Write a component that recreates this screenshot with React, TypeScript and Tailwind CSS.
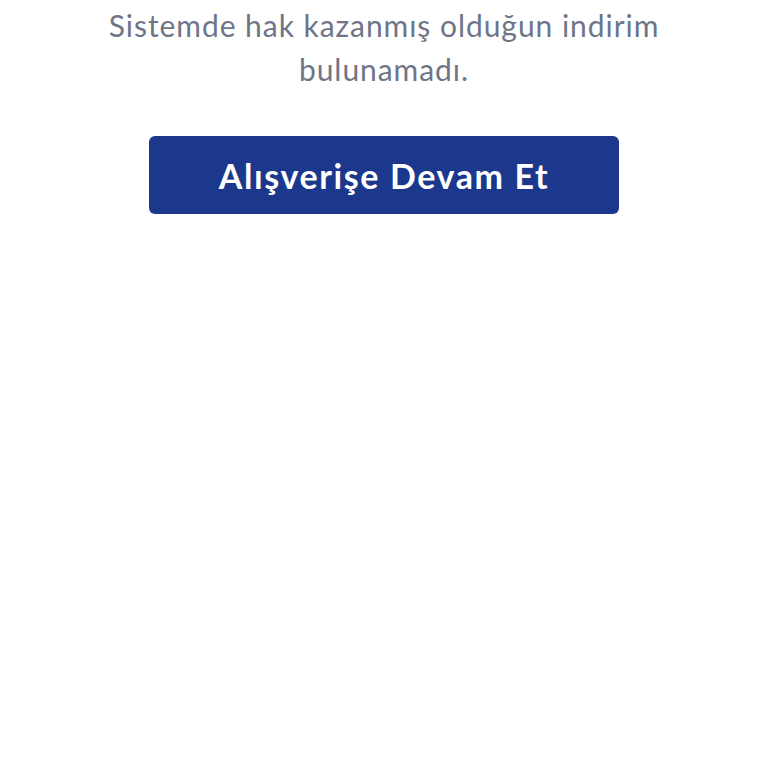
export default function App() {
  return (
    <div className="min-h-screen bg-white flex flex-col items-center pt-[3px]" style={{ fontFamily: "Lato, 'Noto Sans', sans-serif" }}>
      <p className="w-[620px] text-center text-[30px] leading-[44px] tracking-[0.95px] text-[#6e7587]">
        Sistemde hak kazanmış olduğun indirim bulunamadı.
      </p>
      <button className="mt-[45px] w-[470px] h-[78px] rounded-[6px] bg-[#1b388c] text-white text-[34px] font-bold tracking-[1.6px] pt-[1px]">
        Alışverişe Devam Et
      </button>
    </div>
  );
}
